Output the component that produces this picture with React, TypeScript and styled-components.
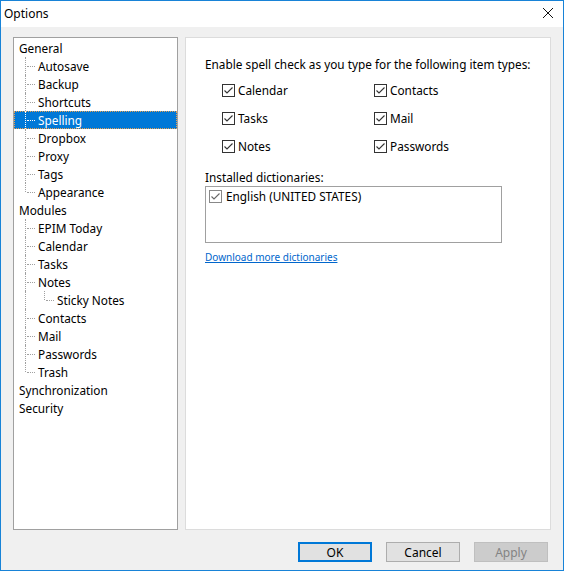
import React from 'react';
import styled, { createGlobalStyle } from 'styled-components';

type TreeItem = {
    label: string,
    level: number,
    last?: boolean,
    selected?: boolean,
}

const treeItems: TreeItem[] = [
    { label: 'General', level: 0 },
    { label: 'Autosave', level: 1 },
    { label: 'Backup', level: 1 },
    { label: 'Shortcuts', level: 1 },
    { label: 'Spelling', level: 1, selected: true },
    { label: 'Dropbox', level: 1 },
    { label: 'Proxy', level: 1 },
    { label: 'Tags', level: 1 },
    { label: 'Appearance', level: 1, last: true },
    { label: 'Modules', level: 0 },
    { label: 'EPIM Today', level: 1 },
    { label: 'Calendar', level: 1 },
    { label: 'Tasks', level: 1 },
    { label: 'Notes', level: 1 },
    { label: 'Sticky Notes', level: 2, last: true },
    { label: 'Contacts', level: 1 },
    { label: 'Mail', level: 1 },
    { label: 'Passwords', level: 1 },
    { label: 'Trash', level: 1, last: true },
    { label: 'Synchronization', level: 0 },
    { label: 'Security', level: 0 },
];

const spellTypes = ['Calendar', 'Contacts', 'Tasks', 'Mail', 'Notes', 'Passwords'];

const CheckMark: React.FC<{ color: string }> = ({ color }) => (
    <svg width="11" height="11" viewBox="0 0 11 11">
        <polyline points="1.5,5.5 4,8 9.5,2.5" fill="none" stroke={color} strokeWidth="1.1" />
    </svg>
);

export default function App() {
    return (
        <>
            <GlobalStyle />
            <Window>
                <TitleBar>
                    <Title>Options</Title>
                    <CloseIcon viewBox="0 0 12 12">
                        <path d="M1 1 L11 11 M11 1 L1 11" stroke="#111" strokeWidth="1" />
                    </CloseIcon>
                </TitleBar>
                <Body>
                    <Panels>
                        <Tree>
                            {treeItems.map((item) => (
                                <TreeRow key={item.label} $selected={item.selected}>
                                    {item.level === 2 && <Guide />}
                                    {item.level > 0 && <Branch $last={item.last} $selected={item.selected} />}
                                    <TreeLabel $level={item.level}>{item.label}</TreeLabel>
                                </TreeRow>
                            ))}
                        </Tree>
                        <Page>
                            <Text>Enable spell check as you type for the following item types:</Text>
                            <CheckGrid>
                                {spellTypes.map((name) => (
                                    <CheckRow key={name}>
                                        <Box><CheckMark color="#333" /></Box>
                                        {name}
                                    </CheckRow>
                                ))}
                            </CheckGrid>
                            <Text>Installed dictionaries:</Text>
                            <ListBox>
                                <ListItem>
                                    <SmallBox><CheckMark color="#666" /></SmallBox>
                                    English (UNITED STATES)
                                </ListItem>
                            </ListBox>
                            <Link>Download more dictionaries</Link>
                        </Page>
                    </Panels>
                    <Footer>
                        <Button $default>OK</Button>
                        <Button>Cancel</Button>
                        <Button $disabled>Apply</Button>
                    </Footer>
                </Body>
            </Window>
        </>
    );
}

const GlobalStyle = createGlobalStyle`
    body {
        margin: 0;
        font-family: "Segoe UI", "Noto Sans", sans-serif;
        font-size: 11.8px;
        color: #000;
    }
`

const Window = styled.div`
    width: 564px;
    height: 571px;
    box-sizing: border-box;
    border: 1px solid #1883d7;
    display: flex;
    flex-direction: column;
    background: #f0f0f0;
`

const TitleBar = styled.div`
    height: 25px;
    background: #fff;
    display: flex;
    align-items: center;
    justify-content: space-between;
    padding: 0 9px 2px 3px;
`

const Title = styled.span`
    font-size: 12px;
`

const CloseIcon = styled.svg`
    width: 12px;
    height: 12px;
`

const Body = styled.div`
    flex: 1;
    display: flex;
    flex-direction: column;
    padding: 10px 12px 8px 12px;
`

const Panels = styled.div`
    display: flex;
    gap: 7px;
    height: 493px;
`

const Tree = styled.div`
    width: 165px;
    box-sizing: border-box;
    border: 1px solid #a0a0a0;
    background: #fff;
    padding-top: 1px;
`

const TreeRow = styled.div<{ $selected?: boolean }>`
    height: 18px;
    display: flex;
    align-items: center;
    background: ${p => p.$selected ? '#0078d7' : 'transparent'};
    color: ${p => p.$selected ? '#fff' : '#000'};
    outline: ${p => p.$selected ? '1px dotted #e8a050' : 'none'};
    outline-offset: -1px;
`

const Guide = styled.span`
    align-self: stretch;
    margin-left: 11px;
    width: 18px;
    border-left: 1px dotted #a0a0a0;
`

const Branch = styled.span<{ $last?: boolean, $selected?: boolean }>`
    position: relative;
    align-self: stretch;
    width: 13px;
    margin-left: 11px;
    ${Guide} + & {
        margin-left: 0;
    }
    &::before {
        content: '';
        position: absolute;
        left: 0;
        top: 0;
        height: ${p => p.$last ? '9px' : '18px'};
        border-left: 1px dotted ${p => p.$selected ? '#fff' : '#a0a0a0'};
    }
    &::after {
        content: '';
        position: absolute;
        left: 2px;
        top: 9px;
        width: 8px;
        border-top: 1px dotted ${p => p.$selected ? '#fff' : '#a0a0a0'};
    }
`

const TreeLabel = styled.span<{ $level: number }>`
    padding-left: ${p => p.$level === 0 ? '5px' : '0'};
    white-space: nowrap;
`

const Page = styled.div`
    flex: 1;
    box-sizing: border-box;
    border: 1px solid #dcdcdc;
    background: #fff;
    padding: 18px 0 0 19px;
    display: flex;
    flex-direction: column;
    align-items: flex-start;
`

const Text = styled.div`
    line-height: 16px;
`

const CheckGrid = styled.div`
    display: grid;
    grid-template-columns: 152px 140px;
    grid-auto-rows: 28px;
    padding: 4px 0 0 17px;
    margin-bottom: 9px;
`

const CheckRow = styled.div`
    display: flex;
    align-items: center;
    gap: 3px;
`

const Box = styled.span`
    width: 13px;
    height: 13px;
    box-sizing: border-box;
    border: 1px solid #333;
    display: flex;
    align-items: center;
    justify-content: center;
`

const SmallBox = styled(Box)`
    border-color: #888;
`

const ListBox = styled.div`
    width: 297px;
    height: 57px;
    box-sizing: border-box;
    border: 1px solid #a0a0a0;
    margin-top: 1px;
    padding: 1px 0 0 3px;
`

const ListItem = styled.div`
    display: flex;
    align-items: center;
    gap: 4px;
    line-height: 16px;
`

const Link = styled.a`
    margin-top: 7px;
    color: #0066cc;
    text-decoration: underline;
    font-size: 10px;
    cursor: pointer;
`

const Footer = styled.div`
    display: flex;
    justify-content: flex-end;
    gap: 14px;
    padding: 12px 3px 0 0;
`

const Button = styled.button<{ $default?: boolean, $disabled?: boolean }>`
    width: 74px;
    height: 20px;
    box-sizing: border-box;
    font-family: inherit;
    font-size: 12px;
    padding: 0;
    background: ${p => p.$disabled ? '#ccc' : '#e1e1e1'};
    color: ${p => p.$disabled ? '#838383' : '#000'};
    border: ${p => p.$default ? '2px solid #0078d7' : p.$disabled ? '1px solid #bfbfbf' : '1px solid #adadad'};
`
